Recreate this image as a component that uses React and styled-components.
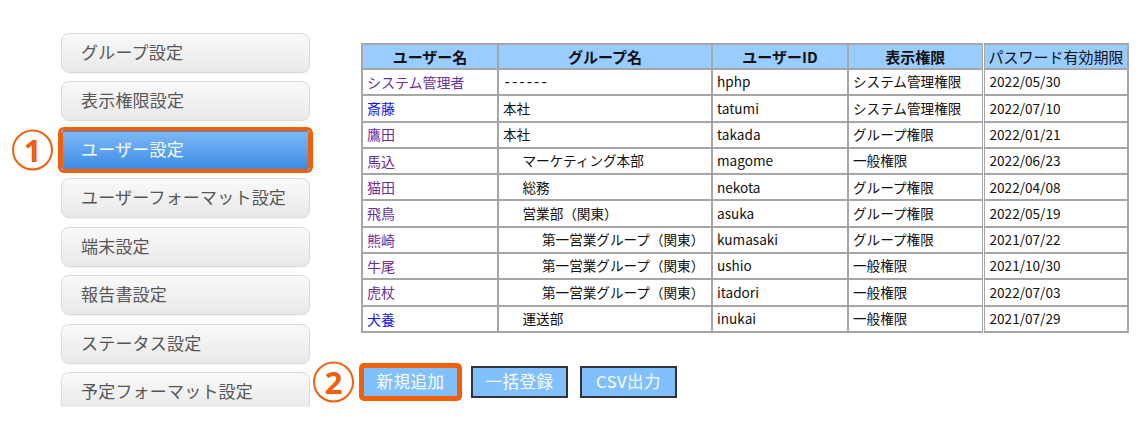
import React from "react";
import styled, { createGlobalStyle, css } from "styled-components";

const ORANGE = "#f25f0a";

const GlobalStyle = createGlobalStyle`
  html, body { margin: 0; padding: 0; background: #ffffff; }
  body { font-family: "Noto Sans CJK JP", "Noto Sans", sans-serif; }
`;

const Page = styled.div`
  display: flex;
  align-items: flex-start;
  width: 1144px;
  height: 425px;
  overflow: hidden;
`;

const SideNav = styled.nav`
  display: flex;
  flex-direction: column;
  gap: 8.45px;
  margin-top: 33px;
  margin-left: 10px;
  padding: 0 3px 0 51px;
  width: 249px;
  height: 374px;
  overflow: hidden;
  flex-shrink: 0;
`;

const NavItem = styled.div`
  position: relative;
  flex-shrink: 0;
  box-sizing: border-box;
  height: 40px;
  display: flex;
  align-items: center;
  padding: 0 0 3px 19px;
  border-radius: 8px;
  font-size: 17px;
  letter-spacing: 0.2px;
  white-space: nowrap;
  ${(p) =>
    p.$active
      ? css`
          color: #ffffff;
          background: linear-gradient(#7cbaf7, #3e8ce6);
          border: 1px solid #3e8ce6;
          border-radius: 3px;
          box-shadow: 0 0 0 3px ${ORANGE}, inset 0 0 0 1px ${ORANGE};
        `
      : css`
          color: #575757;
          background: linear-gradient(#f9f9f9, #e9e9e9);
          border: 1px solid #dadada;
          box-shadow: 0 1px 1px rgba(0, 0, 0, 0.04);
        `}
`;

const Marker = styled.span`
  position: absolute;
  top: 50%;
  right: calc(100% + ${(p) => p.$gap}px);
  transform: translateY(-50%);
  box-sizing: border-box;
  width: 41px;
  height: 41px;
  border: 2px solid ${ORANGE};
  border-radius: 50%;
  display: flex;
  align-items: center;
  justify-content: center;
  color: ${ORANGE};
  font-family: "Noto Sans", "Noto Sans CJK JP", sans-serif;
  font-weight: 700;
  font-size: 31px;
  line-height: 1;
  letter-spacing: 0;
`;

const Main = styled.main`
  display: flex;
  flex-direction: column;
  align-items: flex-start;
  margin-top: 43px;
  margin-left: 48px;
`;

const Table = styled.table`
  border-collapse: collapse;
  table-layout: fixed;
  width: 766px;
  font-family: "Noto Sans CJK JP", sans-serif;
  font-size: 13.6px;
  color: #111;
`;

const Th = styled.th`
  box-sizing: border-box;
  height: 25px;
  padding: 0 4px;
  background: #99ccff;
  border: 2px solid #a6a6a6;
  font-size: 15px;
  font-weight: ${(p) => (p.$plain ? 400 : 700)};
  text-align: ${(p) => (p.$plain ? "left" : "center")};
  white-space: nowrap;
  overflow: hidden;
  ${(p) => p.$last && css`border-left: 3px double #a6a6a6;`}
`;

const Td = styled.td`
  box-sizing: border-box;
  height: 26.3px;
  padding: 0 4px 0 ${(p) => 4 + (p.$indent || 0) * 19.5}px;
  border: 2px solid #a6a6a6;
  white-space: nowrap;
  overflow: hidden;
  line-height: 1;
  ${(p) => p.$last && css`border-left: 3px double #a6a6a6; padding-left: 5px;`}
`;

const UserLink = styled.span`
  font-size: 14px;
  color: ${(p) => (p.$visited ? "#6a2f9e" : "#1515f0")};
`;

const NoGroup = styled.span`
  font-family: "Liberation Mono", monospace;
  font-size: 14px;
  letter-spacing: -1px;
`;

const ButtonRow = styled.div`
  display: flex;
  gap: 12px;
  margin-top: 33px;
  margin-left: 1px;
`;

const ActionButton = styled.button`
  position: relative;
  box-sizing: border-box;
  width: 97px;
  height: 32px;
  padding: 0 0 2px;
  background: #80c0ff;
  color: #ffffff;
  font-family: "Noto Sans CJK JP", sans-serif;
  font-size: 16.5px;
  letter-spacing: 0.5px;
  border: 2px solid ${(p) => (p.$highlight ? ORANGE : "#333333")};
  border-radius: ${(p) => (p.$highlight ? "2px" : "0")};
  ${(p) => p.$highlight && css`box-shadow: 0 0 0 3px ${ORANGE};`}
`;

const navItems = [
  "グループ設定",
  "表示権限設定",
  "ユーザー設定",
  "ユーザーフォーマット設定",
  "端末設定",
  "報告書設定",
  "ステータス設定",
  "予定フォーマット設定",
];

const rows = [
  { name: "システム管理者", visited: true, group: null, indent: 0, id: "hphp", role: "システム管理権限", date: "2022/05/30" },
  { name: "斎藤", visited: false, group: "本社", indent: 0, id: "tatumi", role: "システム管理権限", date: "2022/07/10" },
  { name: "鷹田", visited: true, group: "本社", indent: 0, id: "takada", role: "グループ権限", date: "2022/01/21" },
  { name: "馬込", visited: true, group: "マーケティング本部", indent: 1, id: "magome", role: "一般権限", date: "2022/06/23" },
  { name: "猫田", visited: true, group: "総務", indent: 1, id: "nekota", role: "グループ権限", date: "2022/04/08" },
  { name: "飛鳥", visited: true, group: "営業部（関東）", indent: 1, id: "asuka", role: "グループ権限", date: "2022/05/19" },
  { name: "熊崎", visited: true, group: "第一営業グループ（関東）", indent: 2, id: "kumasaki", role: "グループ権限", date: "2021/07/22" },
  { name: "牛尾", visited: true, group: "第一営業グループ（関東）", indent: 2, id: "ushio", role: "一般権限", date: "2021/10/30" },
  { name: "虎杖", visited: true, group: "第一営業グループ（関東）", indent: 2, id: "itadori", role: "一般権限", date: "2022/07/03" },
  { name: "犬養", visited: false, group: "運送部", indent: 1, id: "inukai", role: "一般権限", date: "2021/07/29" },
];

export default function App() {
  return (
    <>
      <GlobalStyle />
      <Page>
        <SideNav>
          {navItems.map((label, i) => (
            <NavItem key={label} $active={i === 2}>
              {i === 2 && <Marker $gap={9}>1</Marker>}
              {label}
            </NavItem>
          ))}
        </SideNav>
        <Main>
          <Table>
            <colgroup>
              <col style={{ width: 136 }} />
              <col style={{ width: 214 }} />
              <col style={{ width: 136 }} />
              <col style={{ width: 135 }} />
              <col style={{ width: 145 }} />
            </colgroup>
            <thead>
              <tr>
                <Th>ユーザー名</Th>
                <Th>グループ名</Th>
                <Th>ユーザーID</Th>
                <Th>表示権限</Th>
                <Th $plain $last>パスワード有効期限</Th>
              </tr>
            </thead>
            <tbody>
              {rows.map((r) => (
                <tr key={r.id}>
                  <Td>
                    <UserLink $visited={r.visited}>{r.name}</UserLink>
                  </Td>
                  <Td $indent={r.indent}>
                    {r.group === null ? <NoGroup>------</NoGroup> : r.group}
                  </Td>
                  <Td>{r.id}</Td>
                  <Td>{r.role}</Td>
                  <Td $last>{r.date}</Td>
                </tr>
              ))}
            </tbody>
          </Table>
          <ButtonRow>
            <ActionButton $highlight>
              <Marker $gap={10}>2</Marker>
              新規追加
            </ActionButton>
            <ActionButton>一括登録</ActionButton>
            <ActionButton>CSV出力</ActionButton>
          </ButtonRow>
        </Main>
      </Page>
    </>
  );
}
